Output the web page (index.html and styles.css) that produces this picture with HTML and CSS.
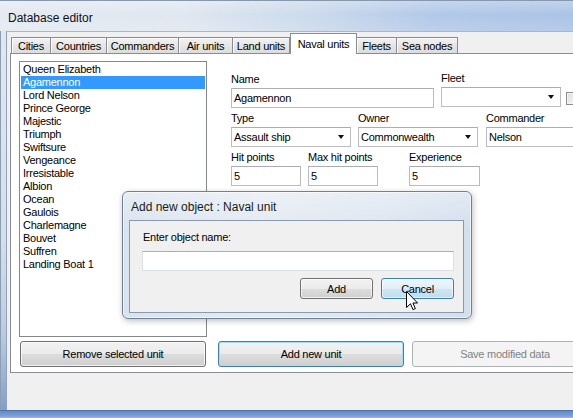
FILE: index.html
```html
<!DOCTYPE html>
<html>
<head>
<meta charset="utf-8">
<title>Database editor</title>
<link rel="stylesheet" href="styles.css">
</head>
<body>
<div class="window">
  <div class="titlebar"><span class="title">Database editor</span></div>
  <div class="mid">
    <div class="lframe"></div>
    <div class="client">
      <div class="tabs">
        <div class="tab t-cities">Cities</div>
        <div class="tab t-countries">Countries</div>
        <div class="tab t-commanders">Commanders</div>
        <div class="tab t-air">Air units</div>
        <div class="tab t-land">Land units</div>
        <div class="tab t-naval active">Naval units</div>
        <div class="tab t-fleets">Fleets</div>
        <div class="tab t-sea">Sea nodes</div>
      </div>
      <div class="page">
        <div class="page-main">
          <ul class="listbox">
            <li>Queen Elizabeth</li>
            <li class="sel">Agamennon</li>
            <li>Lord Nelson</li>
            <li>Prince George</li>
            <li>Majestic</li>
            <li>Triumph</li>
            <li>Swiftsure</li>
            <li>Vengeance</li>
            <li>Irresistable</li>
            <li>Albion</li>
            <li>Ocean</li>
            <li>Gaulois</li>
            <li>Charlemagne</li>
            <li>Bouvet</li>
            <li>Suffren</li>
            <li>Landing Boat 1</li>
          </ul>
          <div class="fields">
            <div class="row">
              <div class="field f-name"><span class="lbl">Name</span><div class="tbox">Agamennon</div></div>
              <div class="field f-fleet"><span class="lbl">Fleet</span><div class="tbox combo"><span class="val"></span><span class="arrow"></span></div></div>
              <div class="check"></div>
            </div>
            <div class="row">
              <div class="field f-type"><span class="lbl">Type</span><div class="tbox combo"><span class="val">Assault ship</span><span class="arrow"></span></div></div>
              <div class="field f-owner"><span class="lbl">Owner</span><div class="tbox combo"><span class="val">Commonwealth</span><span class="arrow"></span></div></div>
              <div class="field f-cmd"><span class="lbl">Commander</span><div class="tbox">Nelson</div></div>
            </div>
            <div class="row">
              <div class="field f-hit"><span class="lbl">Hit points</span><div class="tbox">5</div></div>
              <div class="field f-max"><span class="lbl">Max hit points</span><div class="tbox">5</div></div>
              <div class="field f-exp"><span class="lbl">Experience</span><div class="tbox">5</div></div>
            </div>
          </div>
        </div>
        <div class="buttons">
          <div class="btn big">Remove selected unit</div>
          <div class="btn big default">Add new unit</div>
          <div class="btn big disabled">Save modified data</div>
        </div>
      </div>
    </div>
  </div>
  <div class="bframe"></div>
</div>

<div class="dialog">
  <div class="dlg-title">Add new object : Naval unit</div>
  <div class="dlg-client">
    <div class="lbl">Enter object name:</div>
    <div class="tbox dlg-input"></div>
    <div class="dlg-buttons">
      <div class="btn small">Add</div>
      <div class="btn small hover">Cancel</div>
    </div>
  </div>
</div>

<svg class="cursor" width="13" height="21" viewBox="0 0 13 21">
  <path d="M0.5 0.5 L0.5 16.5 L4.5 12.8 L7 18.6 L9.4 17.6 L6.9 12 L11.6 12 Z" fill="#fff" stroke="#000" stroke-width="1" stroke-linejoin="miter"/>
</svg>
</body>
</html>
```

FILE: styles.css
```css
* { box-sizing: border-box; margin: 0; padding: 0; }
html, body { width: 573px; height: 418px; overflow: hidden; }
body {
  position: relative;
  font-family: "Liberation Sans", Arial, sans-serif;
  font-size: 11px;
  letter-spacing: -0.25px;
  color: #000;
  background: #cfdcec;
}

.window { width: 620px; height: 418px; display: flex; flex-direction: column; }

.titlebar {
  height: 31px;
  flex: none;
  padding: 3px 0 0 8px;
  display: flex;
  align-items: center;
  border-top: 1px solid #8797ae;
  background:
    linear-gradient(to bottom, rgba(255,255,255,0.25), rgba(255,255,255,0) 45%, rgba(255,255,255,0.12)),
    linear-gradient(to right, #e4eaf2 0%, #dfe7f0 30%, #ccdaec 50%, #b3c9e8 70%, #a9c2e6 100%);
}
.title { font-size: 12px; letter-spacing: 0; color: #111; }

.mid { display: flex; height: 379px; flex: none; }
.lframe {
  width: 6px;
  border-left: 1px solid #8e9db2;
  background: linear-gradient(to bottom, #dfe7f0 0%, #d4dfec 55%, #b9cbe4 80%, #7f9fcf 100%);
}
.client {
  flex: 1;
  background: #f0f0f0;
  border-left: 1px solid #93a2b7;
  border-top: 1px solid #a9b7c9;
  padding: 1px 0 0 3px;
  overflow: hidden;
}

.bframe {
  height: 8px;
  flex: none;
  border-top: 1px solid #4e74ad;
  background: linear-gradient(to bottom, #6389c2, #7aa0d4 70%, #9ab8e0);
}

/* tabs */
.tabs {
  display: flex;
  align-items: flex-end;
  height: 21px;
  padding-left: 1px;
  margin-bottom: -1px;
  position: relative;
  z-index: 1;
}
.tab {
  height: 16px;
  margin-bottom: 1px;
  padding-top: 1px;
  line-height: 14px;
  text-align: center;
  white-space: nowrap;
  border: 1px solid #898c95;
  border-bottom: none;
  border-left: none;
  background: linear-gradient(to bottom, #f3f3f3, #e6e6e6 50%, #dcdcdc);
  box-shadow: inset 1px 1px 0 #fcfcfc;
}
.tab.t-cities { width: 40px; border-left: 1px solid #898c95; }
.tab.t-countries { width: 56px; }
.tab.t-commanders { width: 72px; }
.tab.t-air { width: 54px; }
.tab.t-land { width: 57px; }
.tab.t-naval { width: 67px; }
.tab.t-fleets { width: 40px; }
.tab.t-sea { width: 61px; }
.tab.active {
  height: 21px;
  margin-bottom: 0;
  padding-top: 3px;
  background: #fff;
  border-left: 1px solid #898c95;
  box-shadow: none;
  position: relative;
  z-index: 2;
}

/* page */
.page {
  background: #fff;
  border: 1px solid #898c95;
  border-right: none;
  padding: 7px 0 5px 8px;
}
.page-main { display: flex; gap: 24px; }

.listbox {
  list-style: none;
  width: 188px;
  height: 276px;
  border: 1px solid #828790;
  padding: 1px;
}
.listbox li { height: 13px; line-height: 13px; padding-left: 2px; white-space: nowrap; }
.listbox li.sel { background: #3399ff; color: #fff; }

.fields { padding-top: 12px; display: flex; flex-direction: column; gap: 4px; }
.row { display: flex; align-items: flex-start; }
.field { display: flex; flex-direction: column; }
.lbl { display: block; height: 13px; line-height: 13px; margin-bottom: 2px; white-space: nowrap; }

.tbox {
  height: 20px;
  background: #fff;
  border: 1px solid #b9bcc2;
  border-top-color: #abadb3;
  padding: 0 2px;
  line-height: 18px;
  white-space: nowrap;
  overflow: hidden;
}
.combo { position: relative; display: flex; }
.arrow {
  position: absolute;
  right: 6px;
  top: 7px;
  width: 0;
  height: 0;
  border-left: 3px solid transparent;
  border-right: 3px solid transparent;
  border-top: 4px solid #111;
}

.f-name { width: 203px; }
.f-fleet { width: 120px; margin-left: 7px; margin-top: -1px; }
.check {
  width: 13px;
  height: 13px;
  margin: 19px 0 0 5px;
  border: 1px solid #8e8f8f;
  background: linear-gradient(135deg, #dcdcdc, #fbfbfb);
  box-shadow: inset 0 0 0 1px #f4f4f4;
}
.f-type { width: 120px; }
.f-owner { width: 120px; margin-left: 7px; }
.f-cmd { width: 120px; margin-left: 8px; }
.f-hit { width: 70px; }
.f-max { width: 70px; margin-left: 7px; }
.f-exp { width: 71px; margin-left: 31px; }

/* buttons */
.buttons { display: flex; margin-top: 4px; padding-left: 1px; }
.btn {
  display: flex;
  align-items: center;
  justify-content: center;
  white-space: nowrap;
  border: 1px solid #707070;
  border-radius: 3px;
  background: linear-gradient(to bottom, #f2f2f2 0%, #ebebeb 50%, #dddddd 51%, #cfcfcf 100%);
  box-shadow: inset 0 0 0 1px rgba(255,255,255,0.7);
}
.btn.big { width: 186px; height: 26px; }
.buttons .btn.default { margin-left: 12px; }
.buttons .btn.disabled { margin-left: 8px; }
.btn.default {
  border-color: #3c7fb1;
  box-shadow: inset 0 0 0 1px #a6dcf7;
}
.btn.disabled {
  border-color: #adb2b5;
  background: #f4f4f4;
  color: #838383;
  box-shadow: none;
}
.btn.small { width: 73px; height: 21px; }
.btn.small + .btn.small { margin-left: 8px; }
.btn.hover {
  border-color: #3c7fb1;
  background: linear-gradient(to bottom, #ecf5fb 0%, #e1eff8 50%, #cfe6f4 51%, #bfdcee 100%);
  box-shadow: inset 0 0 0 1px rgba(255,255,255,0.6);
}

/* dialog */
.dialog {
  position: absolute;
  left: 122px;
  top: 191px;
  width: 350px;
  height: 128px;
  display: flex;
  flex-direction: column;
  padding: 0 7px 5px 6px;
  border: 1px solid #6f8198;
  border-radius: 6px;
  background:
    linear-gradient(to bottom, rgba(255,255,255,0.35), rgba(255,255,255,0) 30%),
    linear-gradient(to right, #d9e3ee, #e4eaf2 40%, #dce5f0 75%, #d3dfed);
  box-shadow: inset 0 0 0 1px rgba(255,255,255,0.55), 1px 2px 6px rgba(0,0,0,0.25);
}
.dlg-title {
  height: 28px;
  flex: none;
  padding: 2px 0 0 2px;
  display: flex;
  align-items: center;
  font-size: 12px;
  letter-spacing: 0;
  color: #1a1a1a;
}
.dlg-client {
  flex: 1;
  background: #f0f0f0;
  border: 1px solid #8b9aae;
  padding: 10px 8px 0 12px;
}
.dlg-client .lbl { margin-bottom: 7px; padding-left: 1px; }
.dlg-input {
  width: 312px;
  border-color: #dbdfe6;
  border-top-color: #abadb3;
}
.dlg-buttons { display: flex; justify-content: flex-end; margin-top: 7px; padding-right: 1px; }

.cursor { position: absolute; left: 406px; top: 291px; }
```
